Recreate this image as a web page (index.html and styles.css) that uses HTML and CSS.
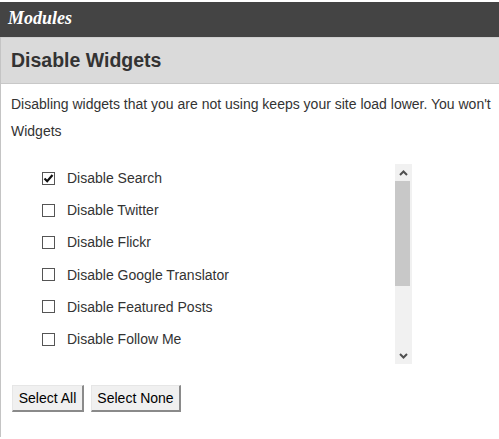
FILE: index.html
```html
<!DOCTYPE html>
<html>
<head>
<meta charset="utf-8">
<link rel="stylesheet" href="styles.css">
</head>
<body>
<div class="topbar"><span class="topbar-title">Modules</span></div>
<div class="panel">
  <div class="panel-head"><h2>Disable Widgets</h2></div>
  <div class="panel-body">
    <p class="desc">Disabling widgets that you are not using keeps your site load lower. You won't Widgets</p>
    <div class="listbox">
      <div class="list-view">
        <ul class="list">
          <li class="row"><span class="cb checked"><svg viewBox="0 0 11 11" width="11" height="11"><path d="M1.5 5.5 L4.2 8.2 L9.5 2" fill="none" stroke="#111" stroke-width="2.2"/></svg></span><span class="lbl">Disable Search</span></li>
          <li class="row"><span class="cb"></span><span class="lbl">Disable Twitter</span></li>
          <li class="row"><span class="cb"></span><span class="lbl">Disable Flickr</span></li>
          <li class="row"><span class="cb"></span><span class="lbl">Disable Google Translator</span></li>
          <li class="row"><span class="cb"></span><span class="lbl">Disable Featured Posts</span></li>
          <li class="row"><span class="cb"></span><span class="lbl">Disable Follow Me</span></li>
        </ul>
      </div>
      <div class="scrollbar">
        <div class="sb-btn"><svg width="9" height="6" viewBox="0 0 9 6"><path d="M1 5 L4.5 1.5 L8 5" fill="none" stroke="#505050" stroke-width="2"/></svg></div>
        <div class="sb-track"><div class="sb-thumb"></div></div>
        <div class="sb-btn"><svg width="9" height="6" viewBox="0 0 9 6"><path d="M1 1 L4.5 4.5 L8 1" fill="none" stroke="#505050" stroke-width="2"/></svg></div>
      </div>
    </div>
    <div class="actions">
      <button class="btn btn-all">Select All</button>
      <button class="btn btn-none">Select None</button>
    </div>
  </div>
</div>
</body>
</html>
```
FILE: styles.css
```css
html, body {
  margin: 0;
  padding: 0;
  background: #fff;
  width: 499px;
  overflow: hidden;
}
body {
  padding-top: 2px;
  font-family: "Liberation Sans", Arial, sans-serif;
}
.topbar {
  height: 35px;
  background: #444444;
  display: flex;
  align-items: center;
  padding-left: 8px;
}
.topbar-title {
  font-family: "Liberation Serif", "Times New Roman", serif;
  font-style: italic;
  font-weight: bold;
  font-size: 18px;
  color: #fff;
  margin-top: -2px;
}
.panel {
  border-left: 1px solid #c4c4c4;
  height: 400px;
}
.panel-head {
  height: 45px;
  background: #dadada;
  border-top: 1px solid #cfcfcf;
  border-bottom: 1px solid #c8c8c8;
  display: flex;
  align-items: center;
  padding-left: 10px;
}
.panel-head h2 {
  margin: 0;
  font-size: 19.5px;
  font-weight: bold;
  color: #333;
  margin-top: -1px;
}
.panel-body {
  padding: 0 10px;
}
.desc {
  margin: 7px 0 0;
  font-size: 14px;
  line-height: 27px;
  color: #333;
  width: 525px;
}
.listbox {
  margin: 19px 0 0 1px;
  width: 400px;
  height: 200px;
  display: flex;
}
.list-view {
  flex: 1;
  overflow: hidden;
}
.list {
  list-style: none;
  margin: -2px 0 0;
  padding: 0;
}
.row {
  height: 32.2px;
  display: flex;
  align-items: center;
  padding-left: 30px;
}
.cb {
  width: 11px;
  height: 11px;
  border: 1px solid #555;
  background: #fff;
  display: flex;
  align-items: center;
  justify-content: center;
  flex: none;
}
.cb svg { display: block; }
.lbl {
  margin-left: 12px;
  font-size: 14px;
  color: #333;
}
.scrollbar {
  width: 17px;
  background: #f1f1f1;
  display: flex;
  flex-direction: column;
}
.sb-btn {
  height: 17px;
  display: flex;
  align-items: center;
  justify-content: center;
}
.sb-track {
  flex: 1;
}
.sb-thumb {
  height: 105px;
  width: 15px;
  background: #c8c8c8;
}
.actions {
  margin: 21px 0 0 1px;
  display: flex;
  gap: 7px;
}
.btn {
  font-family: "Liberation Sans", Arial, sans-serif;
  font-size: 14px;
  color: #000;
  background: #f0f0f0;
  height: 27px;
  padding: 0;
  border-style: solid;
  border-width: 1px 2px 2px 1px;
  border-color: #e6e6e6 #8a8a8a #8a8a8a #e6e6e6;
  border-radius: 0;
  margin: 0;
  white-space: nowrap;
}
.btn-all { width: 72px; }
.btn-none { width: 90px; }
```
